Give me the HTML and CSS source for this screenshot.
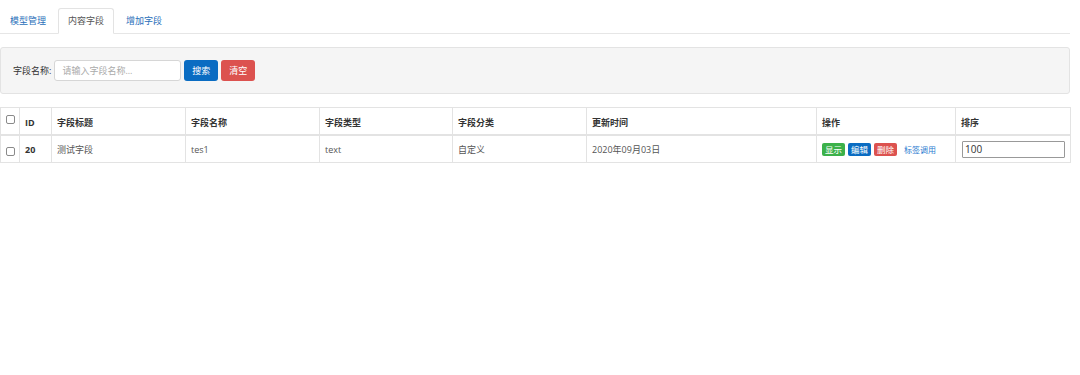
FILE: index.html
```html
<!DOCTYPE html>
<html lang="zh-CN">

<head>
    <meta charset="UTF-8">
    <meta name="viewport" content="width=device-width, initial-scale=1.0">
    <title>内容字段</title>
    <link rel="stylesheet" href="styles.css">
</head>

<body>

    <div class="pagina">

        <ul class="abas">
            <li><a href="#">模型管理</a></li>
            <li class="ativa"><a href="#">内容字段</a></li>
            <li><a href="#">增加字段</a></li>
        </ul>

        <div class="busca">
            <label for="nomeCampo">字段名称:</label>
            <input type="text" id="nomeCampo" placeholder="请输入字段名称...">
            <button class="botao azul">搜索</button>
            <button class="botao vermelho">清空</button>
        </div>

        <table class="tabela">
            <colgroup>
                <col class="c-check">
                <col class="c-id">
                <col class="c-titulo">
                <col class="c-nome">
                <col class="c-tipo">
                <col class="c-classe">
                <col class="c-data">
                <col class="c-acoes">
                <col class="c-ordem">
            </colgroup>
            <thead>
                <tr>
                    <th class="topo-check"><input type="checkbox" class="caixa"></th>
                    <th>ID</th>
                    <th>字段标题</th>
                    <th>字段名称</th>
                    <th>字段类型</th>
                    <th>字段分类</th>
                    <th>更新时间</th>
                    <th>操作</th>
                    <th>排序</th>
                </tr>
            </thead>
            <tbody>
                <tr>
                    <td><input type="checkbox" class="caixa"></td>
                    <td class="negrito">20</td>
                    <td>测试字段</td>
                    <td>tes1</td>
                    <td>text</td>
                    <td>自定义</td>
                    <td>2020年09月03日</td>
                    <td>
                        <div class="acoes">
                            <a href="#" class="mini verde">显示</a>
                            <a href="#" class="mini azul">编辑</a>
                            <a href="#" class="mini vermelho">删除</a>
                            <a href="#" class="link">标签调用</a>
                        </div>
                    </td>
                    <td><input type="text" class="ordem" value="100"></td>
                </tr>
            </tbody>
        </table>

    </div>

</body>

</html>
```

FILE: styles.css
```css
html {
    background-color: #fff;
}

body {
    margin: 0;
    font-family: "Open Sans", "Noto Sans CJK SC", sans-serif;
    font-size: 9px;
    color: #555;
}

.pagina {
    width: 1070px;
}

/* abas */
.abas {
    list-style: none;
    margin: 8px 0 0;
    padding: 0;
    display: flex;
    gap: 2px;
    border-bottom: 1px solid #e6e6e6;
}

.abas li {
    margin-bottom: -1px;
}

.abas a {
    display: block;
    width: 36px;
    padding: 7px 9px;
    line-height: 10px;
    border: 1px solid transparent;
    border-radius: 3px 3px 0 0;
    color: #2a6fba;
    text-decoration: none;
    text-align: center;
}

.abas .ativa a {
    color: #555;
    background-color: #fff;
    border-color: #e3e3e3 #e3e3e3 transparent;
}

/* busca */
.busca {
    margin-top: 13px;
    padding: 12px;
    background-color: #f5f5f5;
    border: 1px solid #e3e3e3;
    border-radius: 3px;
    display: flex;
    align-items: center;
    height: 21px;
}

.busca label {
    color: #333;
    margin-right: 3px;
}

.busca input {
    box-sizing: border-box;
    width: 127px;
    height: 21px;
    padding: 0 7px;
    border: 1px solid #d6d6d6;
    border-radius: 3px;
    font-family: inherit;
    font-size: 9px;
    color: #555;
    outline: none;
}

.busca input::placeholder {
    color: #aaa;
}

.botao {
    box-sizing: border-box;
    height: 21px;
    width: 34px;
    margin-left: 3px;
    border: none;
    border-radius: 3px;
    font-family: inherit;
    font-size: 9px;
    color: #fff;
    padding: 0;
}

.azul {
    background-color: #0a6cc2;
}

.vermelho {
    background-color: #dc524f;
}

.verde {
    background-color: #3cb14a;
}

/* tabela */
.tabela {
    margin-top: 13px;
    width: 1070px;
    table-layout: fixed;
    border-collapse: collapse;
    border: 1px solid #e3e3e3;
}

.c-check { width: 19px; }
.c-id { width: 32px; }
.c-titulo { width: 134px; }
.c-nome { width: 134px; }
.c-tipo { width: 133px; }
.c-classe { width: 134px; }
.c-data { width: 230px; }
.c-acoes { width: 139px; }
.c-ordem { width: 115px; }

.tabela th,
.tabela td {
    border: 1px solid #e3e3e3;
    padding: 0 5px;
    text-align: left;
    white-space: nowrap;
}

.tabela th {
    height: 24px;
    padding-top: 2px;
    color: #333;
    font-weight: bold;
    border-bottom: 2px solid #e3e3e3;
}

.tabela td {
    height: 26px;
}

.tabela th:first-child,
.tabela td:first-child {
    padding: 0;
    text-align: center;
}

.topo-check {
    vertical-align: top;
}

.topo-check .caixa {
    margin-top: 7px;
}

.negrito {
    font-weight: bold;
    color: #333;
}

.caixa {
    appearance: none;
    width: 9px;
    height: 9px;
    margin: 2px 0 0;
    border: 1px solid #8a8a8a;
    border-radius: 2px;
    background-color: #fff;
    vertical-align: middle;
}

.acoes {
    display: flex;
    align-items: center;
    gap: 3px;
}

.mini {
    display: block;
    width: 17px;
    padding: 0 3px;
    line-height: 13px;
    border-radius: 2px;
    font-size: 8.5px;
    text-align: center;
    color: #fff;
    text-decoration: none;
}

.link {
    margin-left: 4px;
    font-size: 8px;
    color: #2a7ad0;
    text-decoration: none;
}

.ordem {
    box-sizing: border-box;
    width: 103px;
    height: 17px;
    margin-left: 1px;
    padding: 0 2px;
    border: 1px solid #999;
    border-radius: 1px;
    font-family: inherit;
    font-size: 10px;
    color: #333;
    display: block;
}
```
